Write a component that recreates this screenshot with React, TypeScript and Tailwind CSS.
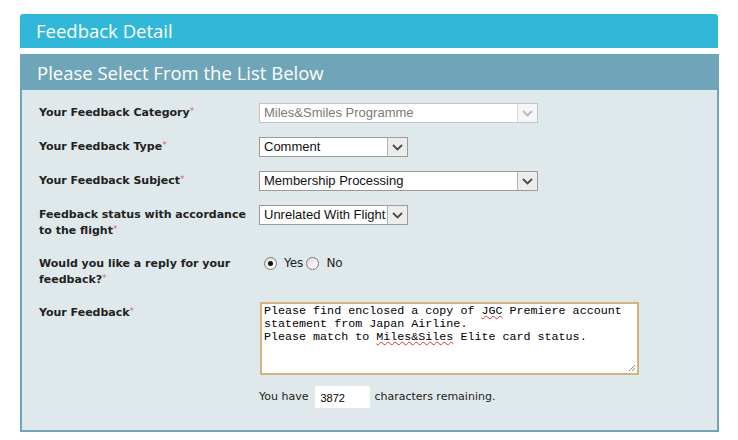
import React from 'react';

const LABEL_FONT = { fontFamily: '"DejaVu Sans", Verdana, sans-serif' };

function Req() {
  return <span className="relative -top-[2px] text-[#e0607a] font-normal text-[9px] leading-none">*</span>;
}

function Chevron({ light }: { light?: boolean }) {
  return (
    <svg width="11" height="7" viewBox="0 0 11 7">
      <path d="M1 1 L5.5 5.5 L10 1" fill="none" stroke={light ? '#b8b8b8' : '#4a4a4a'} strokeWidth="1.8" />
    </svg>
  );
}

function Select({ value, width, disabled }: { value: string; width: string; disabled?: boolean }) {
  return (
    <div
      className={`${width} h-[20px] flex bg-white border ${disabled ? 'border-[#c4c4c4]' : 'border-[#9a9a9a]'}`}
      style={{ fontFamily: '"Liberation Sans", Arial, sans-serif' }}
    >
      <div className={`flex-1 min-w-0 overflow-hidden whitespace-nowrap pl-[4px] text-[13px] leading-[18px] ${disabled ? 'text-[#7a7a7a]' : 'text-[#111]'}`}>
        {value}
      </div>
      <div className={`w-[20px] h-full flex items-center justify-center border-l ${disabled ? 'border-[#dcdcdc] bg-[#f6f6f6]' : 'border-[#b4b4b4] bg-[#ececec]'}`}>
        <Chevron light={disabled} />
      </div>
    </div>
  );
}

function Radio({ checked }: { checked?: boolean }) {
  return (
    <span className="w-[13px] h-[13px] rounded-full border border-[#7b7b7b] bg-gradient-to-br from-[#dcdcdc] to-white flex items-center justify-center">
      {checked && <span className="w-[5px] h-[5px] rounded-full bg-[#111]" />}
    </span>
  );
}

function Row({ label, children, className }: { label: React.ReactNode; children: React.ReactNode; className?: string }) {
  return (
    <div className={`flex items-start ${className ?? ''}`}>
      <div className="w-[220px] pr-[10px] pt-[2px] text-[11px] leading-[16px] font-bold text-[#222]" style={LABEL_FONT}>
        {label}
      </div>
      <div className="flex-1">{children}</div>
    </div>
  );
}

export default function App() {
  return (
    <div className="w-[738px] h-[440px] bg-white pt-[14px] px-[20px]">
      {/* ── Title bar ───────────────────────────────────────────── */}
      <div
        className="h-[34px] bg-[#31b8d8] rounded-t-[3px] pl-[16px] flex items-center text-white text-[18.5px]"
        style={{ fontFamily: '"Open Sans", sans-serif' }}
      >
        Feedback Detail
      </div>

      {/* ── Panel ───────────────────────────────────────────────── */}
      <div className="mt-[6px] w-[699px] h-[378px] border-2 border-[#6ea5b8] bg-[#dfe8ea] flex flex-col">
        <div
          className="h-[34px] bg-[#6ea5b8] pl-[15px] flex items-center text-white text-[18.5px]"
          style={{ fontFamily: '"Open Sans", sans-serif' }}
        >
          Please Select From the List Below
        </div>

        <div className="pl-[17px] pt-[13px] flex flex-col">
          <Row label={<>Your Feedback Category<Req /></>}>
            <Select value="Miles&Smiles Programme" width="w-[279px]" disabled />
          </Row>
          <Row className="mt-[14px]" label={<>Your Feedback Type<Req /></>}>
            <Select value="Comment" width="w-[149px]" />
          </Row>
          <Row className="mt-[14px]" label={<>Your Feedback Subject<Req /></>}>
            <Select value="Membership Processing" width="w-[279px]" />
          </Row>
          <Row className="mt-[14px]" label={<>Feedback status with accordance to the flight<Req /></>}>
            <Select value="Unrelated With Flight" width="w-[149px]" />
          </Row>

          <Row className="mt-[15px]" label={<>Would you like a reply for your feedback?<Req /></>}>
            <div className="flex items-center h-[18px] text-[12px] text-[#222]" style={LABEL_FONT}>
              <span className="ml-[5px]"><Radio checked /></span>
              <span className="ml-[7px]">Yes</span>
              <span className="ml-[3px]"><Radio /></span>
              <span className="ml-[7px]">No</span>
            </div>
          </Row>

          <Row className="mt-[15px]" label={<>Your Feedback<Req /></>}>
            <div
              className="relative ml-[1px] -mt-[1px] w-[379px] h-[73px] bg-white border-2 border-[#d3b47e] pl-[2px] pt-[1px] text-[11.7px] leading-[13px] text-black"
              style={{ fontFamily: '"Liberation Mono", "DejaVu Sans Mono", monospace' }}
            >
              <div>
                Please find enclosed a copy of{' '}
                <span className="underline decoration-wavy decoration-[#e03030] decoration-1">JGC</span> Premiere account
              </div>
              <div>statement from Japan Airline.</div>
              <div>
                Please match to{' '}
                <span className="underline decoration-wavy decoration-[#e03030] decoration-1">Miles&amp;Siles</span> Elite card status.
              </div>
              <svg className="absolute right-[1px] bottom-[1px]" width="9" height="9" viewBox="0 0 9 9">
                <path d="M8 2 L2 8 M8 5 L5 8" stroke="#8a8a8a" strokeWidth="1" />
              </svg>
            </div>
          </Row>

          <div className="mt-[11px] ml-[220px] flex items-center text-[11px] text-[#222]" style={LABEL_FONT}>
            <span>You have</span>
            <div
              className="ml-[7px] w-[55px] h-[22px] bg-white pl-[5px] pt-[5px] text-[11px] leading-[14px] text-black"
              style={{ fontFamily: '"Liberation Sans", Arial, sans-serif' }}
            >
              3872
            </div>
            <span className="ml-[4px]">characters remaining.</span>
          </div>
        </div>
      </div>
    </div>
  );
}
